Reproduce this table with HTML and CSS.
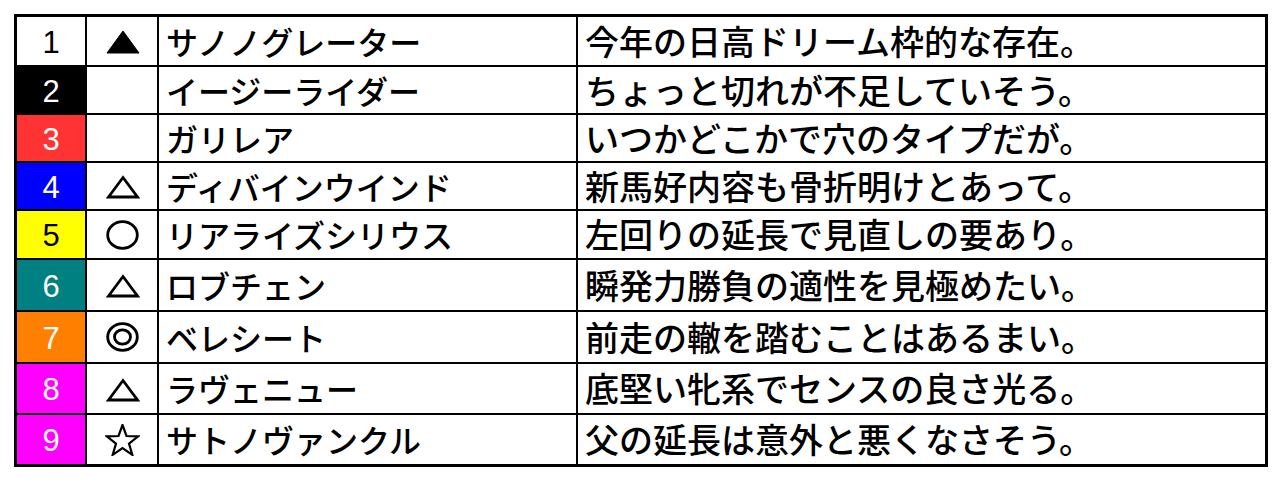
FILE: index.html
```html
<!DOCTYPE html>
<html lang="ja">
<head>
<meta charset="utf-8">
<title>予想</title>
<link rel="stylesheet" href="styles.css">
</head>
<body>
<div class="board">
  <div class="num n1">1</div>
  <div class="mark" title="▲"><svg class="tri" width="34" height="24" viewBox="0 0 34 24"><polygon points="1,23 17,1 33,23" fill="#000" stroke="#000" stroke-width="1"/></svg></div>
  <div class="name">サノノグレーター</div><div class="note">今年の日高ドリーム枠的な存在。</div>

  <div class="num n2">2</div><div class="mark"></div><div class="name">イージーライダー</div><div class="note">ちょっと切れが不足していそう。</div>

  <div class="num n3">3</div><div class="mark"></div><div class="name">ガリレア</div><div class="note">いつかどこかで穴のタイプだが。</div>

  <div class="num n4">4</div>
  <div class="mark" title="△"><svg class="tri" width="34" height="24" viewBox="0 0 34 24"><polygon points="2.5,22 17,2.5 31.5,22" fill="none" stroke="#000" stroke-width="2.8" stroke-linejoin="miter"/></svg></div>
  <div class="name">ディバインウインド</div><div class="note">新馬好内容も骨折明けとあって。</div>

  <div class="num n5">5</div>
  <div class="mark" title="○"><svg width="33" height="30" viewBox="0 0 33 30"><ellipse cx="16.5" cy="15" rx="14.8" ry="13.3" fill="none" stroke="#000" stroke-width="2.8"/></svg></div>
  <div class="name">リアライズシリウス</div><div class="note">左回りの延長で見直しの要あり。</div>

  <div class="num n6">6</div>
  <div class="mark" title="△"><svg class="tri" width="34" height="24" viewBox="0 0 34 24"><polygon points="2.5,22 17,2.5 31.5,22" fill="none" stroke="#000" stroke-width="2.8" stroke-linejoin="miter"/></svg></div>
  <div class="name">ロブチェン</div><div class="note">瞬発力勝負の適性を見極めたい。</div>

  <div class="num n7">7</div>
  <div class="mark" title="◎"><svg width="33" height="30" viewBox="0 0 33 30"><ellipse cx="16.5" cy="15" rx="14.8" ry="13.3" fill="none" stroke="#000" stroke-width="2.8"/><ellipse cx="16.5" cy="15" rx="8" ry="7.2" fill="none" stroke="#000" stroke-width="2.8"/></svg></div>
  <div class="name">ベレシート</div><div class="note">前走の轍を踏むことはあるまい。</div>

  <div class="num n8">8</div>
  <div class="mark" title="△"><svg class="tri" width="34" height="24" viewBox="0 0 34 24"><polygon points="2.5,22 17,2.5 31.5,22" fill="none" stroke="#000" stroke-width="2.8" stroke-linejoin="miter"/></svg></div>
  <div class="name">ラヴェニュー</div><div class="note">底堅い牝系でセンスの良さ光る。</div>

  <div class="num n9">9</div>
  <div class="mark" title="☆"><svg width="35" height="32" viewBox="0 0 35 32"><polygon points="17.5,1 21.5,12 33.2,12.3 24,19.6 27.3,30.8 17.5,24.1 7.7,30.8 11,19.6 1.8,12.3 13.5,12" fill="none" stroke="#000" stroke-width="2.2" stroke-linejoin="miter"/></svg></div>
  <div class="name">サトノヴァンクル</div><div class="note">父の延長は意外と悪くなさそう。</div>
</div>
</body>
</html>
```
FILE: styles.css
```css
html, body {
  margin: 0;
  padding: 0;
  background: #ffffff;
}
body {
  padding: 14px 0 0 14px;
  font-family: "Noto Sans CJK JP", "Noto Sans", sans-serif;
}
.board {
  display: grid;
  grid-template-columns: 68px 70px 417px 687px;
  grid-template-rows: 48px 46px 46px 46px 47px 50px 50px 49px 49px;
  gap: 2px;
  width: 1248px;
  background: #000000;
  border: 3px solid #000000;
}
.board > div {
  background: #ffffff;
  display: flex;
  align-items: center;
  color: #000000;
  white-space: nowrap;
}
.num {
  justify-content: center;
  font-family: "Liberation Sans", Arial, sans-serif;
  font-size: 31px;
  line-height: 1.15;
  padding-top: 3px;
}
.mark {
  justify-content: center;
  padding-left: 1px;
}
.mark svg {
  display: block;
}
.mark .tri {
  margin-top: 2px;
}
.name {
  font-size: 32px;
  line-height: 1.2;
  padding-left: 7px;
  font-weight: 500;
}
.note {
  font-size: 34px;
  line-height: 1.2;
  padding-left: 7px;
  font-weight: 500;
}
.board > .n1 { background: #ffffff; color: #000000; }
.board > .n2 { background: #000000; color: #ffffff; }
.board > .n3 { background: #ff3333; color: #ffffff; }
.board > .n4 { background: #0000ff; color: #ffffff; }
.board > .n5 { background: #ffff00; color: #000000; }
.board > .n6 { background: #008080; color: #ffffff; }
.board > .n7 { background: #ff8000; color: #ffffff; }
.board > .n8 { background: #ff00ff; color: #ffffff; }
.board > .n9 { background: #ff00ff; color: #ffffff; }
```
